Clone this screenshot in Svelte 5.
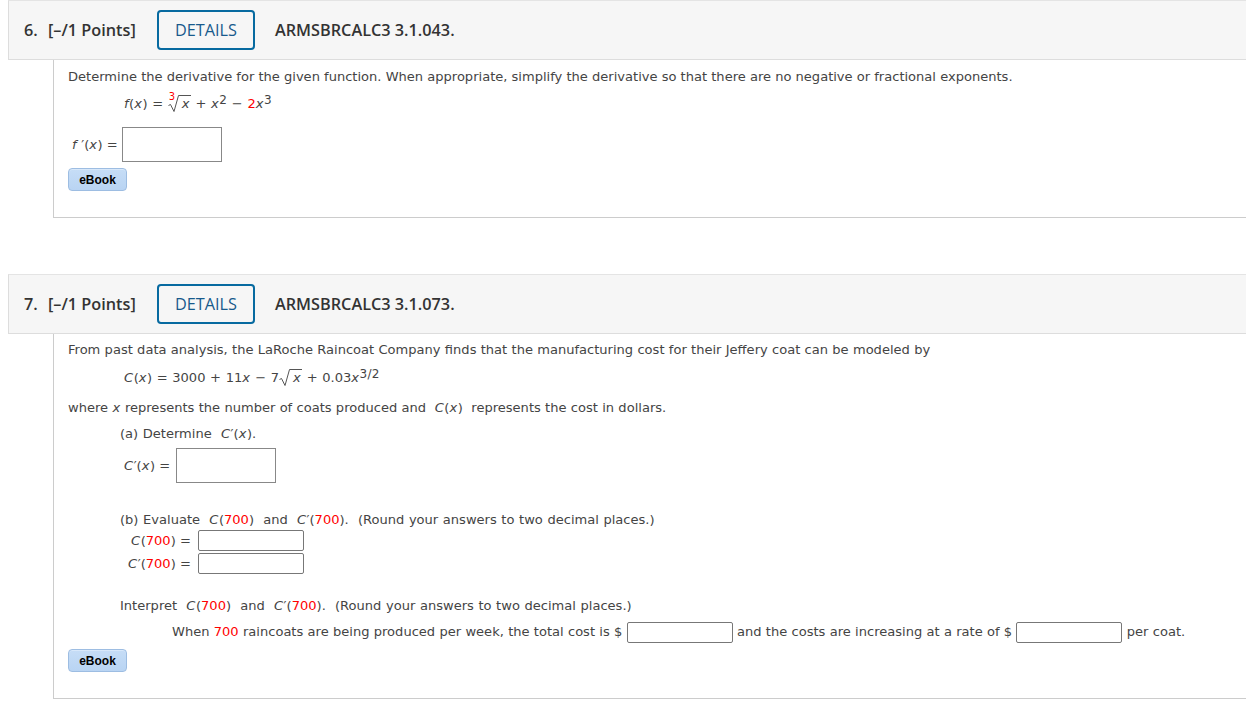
<script>
  const questions = [{ num: 6, code: 'ARMSBRCALC3 3.1.043.' }, { num: 7, code: 'ARMSBRCALC3 3.1.073.' }];
</script>

{#snippet header(q)}
  <div class="head">
    <span class="num">{q.num}.</span>
    <span class="points">[–/1 Points]</span>
    <button class="details">DETAILS</button>
    <span class="code">{q.code}</span>
  </div>
{/snippet}

{#snippet radical(width)}
  <svg class="radical" width={width} height="20" viewBox="0 0 {width} 20" fill="none">
    <path d="M0.5 12.5 L2.5 11.5 L6 18.5 L10.5 2.5 L{width} 2.5" stroke="#555" stroke-width="1"/>
  </svg>
{/snippet}

<div class="page">
  <section class="question q6">
    {@render header(questions[0])}
    <div class="body">
      <p class="line">Determine the derivative for the given function. When appropriate, simplify the derivative so that there are no negative or fractional exponents.</p>
      <p class="math first"><i>f</i>(<i>x</i>) = <span class="root"><sup class="red idx">3</sup>{@render radical(23)}<i class="under">x</i></span> + <i>x</i><sup>2</sup> − <span class="red">2</span><i>x</i><sup>3</sup></p>
      <div class="answer">
        <span><i>f</i> ′(<i>x</i>) =</span>
        <span class="box big"></span>
      </div>
      <button class="ebook">eBook</button>
    </div>
  </section>

  <section class="question q7">
    {@render header(questions[1])}
    <div class="body">
      <p class="line">From past data analysis, the LaRoche Raincoat Company finds that the manufacturing cost for their Jeffery coat can be modeled by</p>
      <p class="math"><i>C</i>(<i>x</i>) = 3000 + 11<i>x</i> − 7<span class="root">{@render radical(23)}<i class="under">x</i></span> + 0.03<i>x</i><sup>3/2</sup></p>
      <p class="line where">where <i>x</i> represents the number of coats produced and &nbsp;<i>C</i>(<i>x</i>)&nbsp; represents the cost in dollars.</p>
      <div class="part">
        <p class="line">(a) Determine &nbsp;<i>C</i>′(<i>x</i>).</p>
        <div class="answer a">
          <span><i>C</i>′(<i>x</i>) =</span>
          <span class="box big"></span>
        </div>
        <p class="line b">(b) Evaluate &nbsp;<i>C</i>(<span class="red">700</span>)&nbsp; and &nbsp;<i>C</i>′(<span class="red">700</span>).&nbsp; (Round your answers to two decimal places.)</p>
        <div class="grid">
          <span class="label"><i>C</i>(<span class="red">700</span>) =</span><span class="box small"></span>
          <span class="label"><i>C</i>′(<span class="red">700</span>) =</span><span class="box small"></span>
        </div>
        <p class="line interp">Interpret &nbsp;<i>C</i>(<span class="red">700</span>)&nbsp; and &nbsp;<i>C</i>′(<span class="red">700</span>).&nbsp; (Round your answers to two decimal places.)</p>
        <p class="line sentence">When <span class="red">700</span> raincoats are being produced per week, the total cost is $ <span class="box small"></span> and the costs are increasing at a rate of $ <span class="box small"></span> per coat.</p>
      </div>
      <button class="ebook">eBook</button>
    </div>
  </section>
</div>

<style>
  :global(body) {
    margin: 0;
    background: #fff;
    overflow: hidden;
  }

  .page {
    width: 1246px;
    height: 728px;
    overflow: hidden;
    color: #444;
    font-family: "DejaVu Sans", Verdana, sans-serif;
    font-size: 13.05px;
  }

  .question {
    margin-left: 8px;
  }

  .q7 {
    margin-top: 56px;
    word-spacing: 0.15px;
  }

  .head {
    display: flex;
    align-items: center;
    height: 58px;
    border: 1px solid #ddd;
    border-right: none;
    border-top-color: #e4e4e4;
    background: #f6f6f6;
    font-family: "Open Sans", "Noto Sans", sans-serif;
    font-size: 16.25px;
    font-weight: 600;
    color: #333;
    word-spacing: 0;
  }

  .num {
    margin-left: 15px;
    width: 24px;
  }

  .points {
    width: 109px;
  }

  .details {
    width: 98px;
    height: 40px;
    padding: 0;
    border: 2px solid #076aa0;
    border-radius: 4px;
    background: transparent;
    color: #185a8c;
    font: inherit;
    font-weight: 500;
  }

  .code {
    margin-left: 20px;
  }

  .body {
    margin-left: 45px;
    padding-left: 14px;
    border-left: 1px solid #ccc;
    border-bottom: 1px solid #ccc;
    display: flow-root;
  }

  .q6 .body {
    height: 157px;
  }

  .q7 .body {
    height: 364px;
  }

  p {
    margin: 0;
  }

  .line {
    white-space: nowrap;
    line-height: 18px;
    margin-top: 7px;
  }

  .q6 .body > .line:first-child {
    margin-top: 8px;
  }

  i {
    font-style: italic;
    letter-spacing: 0.5px;
  }

  .red {
    color: #f00;
  }

  .math {
    margin-left: 56px;
    height: 22px;
    line-height: 22px;
    margin-top: 8px;
    white-space: nowrap;
    word-spacing: 0.5px;
  }

  .math.first {
    margin-top: 7px;
  }

  sup {
    font-size: 12px;
    line-height: 0;
    vertical-align: 4px;
    letter-spacing: 0.3px;
  }

  .root {
    position: relative;
    display: inline-block;
  }

  .root .idx {
    position: absolute;
    left: 1px;
    top: -2px;
    font-size: 10px;
    line-height: 12px;
    vertical-align: baseline;
  }

  .radical {
    vertical-align: -5px;
  }

  .under {
    position: absolute;
    left: 14px;
    top: 0;
  }

  .answer {
    display: flex;
    align-items: center;
    gap: 4px;
    margin: 12px 0 0 4px;
  }

  .answer.a {
    gap: 6px;
    margin: 5px 0 0 4px;
  }

  .box {
    display: inline-block;
    box-sizing: border-box;
    background: #fff;
  }

  .box.big {
    width: 100px;
    height: 35px;
    border: 1px solid #888;
  }

  .box.small {
    width: 106px;
    height: 21px;
    border: 1px solid #777;
    border-radius: 2px;
    vertical-align: middle;
  }

  .ebook {
    display: block;
    width: 59px;
    height: 23px;
    margin-top: 6px;
    padding: 0;
    border: 1px solid #9dbde2;
    border-radius: 4px;
    background: linear-gradient(#c6ddf6, #b9d4f3);
    box-shadow: inset 0 1px 0 #d8e8fa;
    color: #000;
    font-family: "Liberation Sans", Arial, sans-serif;
    font-size: 12px;
    font-weight: 700;
  }

  .where {
    margin-top: 10px;
  }

  .part {
    margin-left: 52px;
  }

  .part .line {
    word-spacing: 0.45px;
  }

  .part > .line:first-child {
    margin-top: 8px;
  }

  .b {
    margin-top: 28px;
  }

  .grid {
    display: grid;
    grid-template-columns: 71px 106px;
    row-gap: 2px;
    column-gap: 7px;
    margin-top: 1px;
    align-items: center;
  }

  .label {
    text-align: right;
  }

  .interp {
    margin-top: 23px;
  }

  .part .sentence {
    margin-top: 7px;
    margin-left: 52px;
    word-spacing: 0.15px;
  }
</style>
